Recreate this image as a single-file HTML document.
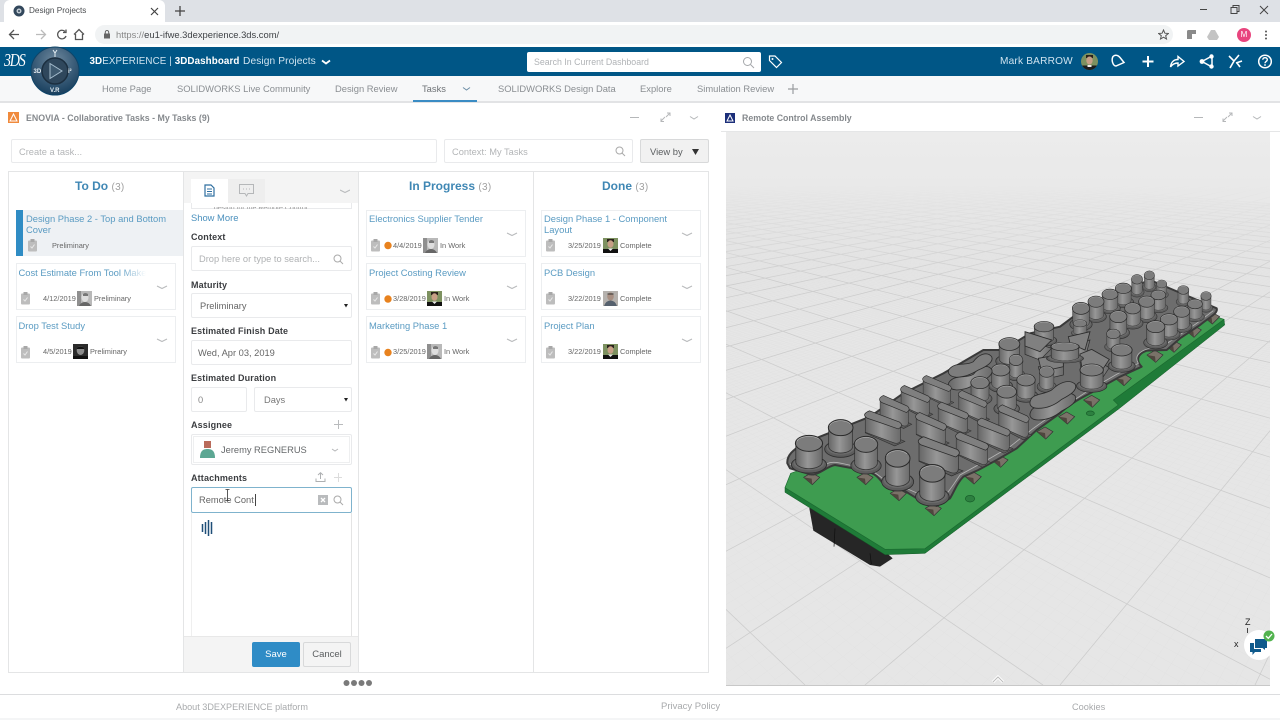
<!DOCTYPE html>
<html><head><meta charset="utf-8"><title>Design Projects</title>
<style>
*{box-sizing:border-box}
html,body{margin:0;padding:0;width:1280px;height:720px;overflow:hidden;background:#fff;font-family:"Liberation Sans",sans-serif}
body{filter:blur(.3px)}
.a,.t{position:absolute}
.t{white-space:nowrap;line-height:12px}
.n{font-size:9.4px;color:#8a8e92;top:83px}
.card{position:absolute;width:160px;height:47px;background:#fff;border:1px solid #eceef0}
.ti{font-size:9.4px;color:#5a9bc2;line-height:11px}
.m{font-size:7.4px;color:#666;line-height:10px}
.lb{font-size:9px;font-weight:bold;color:#3b3d40;letter-spacing:.15px;left:191px}
.inp{position:absolute;background:#fff;border:1px solid #e9eaec;border-radius:2px}
.hd{font-size:12px;font-weight:bold;color:#3f87b4;top:180px}
.hd span{font-weight:normal;color:#a0a0a0;font-size:10px;letter-spacing:.3px}
.ph{font-size:9.3px}
</style></head><body>

<!-- browser chrome -->
<div class="a" style="left:0;top:0;width:1280px;height:22px;background:#dee1e6"></div>
<div class="a" style="left:4px;top:0;width:161px;height:22px;background:#fff;border-radius:6px 6px 0 0"></div>
<svg class="a" style="left:13px;top:5px" width="12" height="12"><circle cx="6" cy="6" r="5.5" fill="#33485c"/><circle cx="6" cy="6" r="2.5" fill="#c3ccd4"/><circle cx="6" cy="6" r="1" fill="#33485c"/></svg>
<div class="t" style="left:29px;top:5px;font-size:8.2px;color:#4a4d50">Design Projects</div>
<svg class="a" style="left:150px;top:7px" width="9" height="9"><path d="M1 1L8 8M8 1L1 8" stroke="#444" stroke-width="1.2"/></svg>
<svg class="a" style="left:175px;top:6px" width="10" height="10"><path d="M5 0V10M0 5H10" stroke="#444" stroke-width="1.3"/></svg>
<svg class="a" style="left:1199px;top:4px" width="72" height="12"><path d="M1 5.5H8" stroke="#444" stroke-width="1"/><path d="M32 3.5h6v6h-6zM34 3.5v-2h6v6h-2" fill="none" stroke="#444" stroke-width="1"/><path d="M61 2L69 10M69 2L61 10" stroke="#444" stroke-width="1"/></svg>

<div class="a" style="left:0;top:22px;width:1280px;height:25px;background:#fff"></div>
<div class="a" style="left:95px;top:25px;width:1078px;height:19px;background:#f1f3f4;border-radius:10px"></div>
<svg class="a" style="left:8px;top:27px" width="80" height="15"><path d="M11 7.5H2M6 3L1.5 7.5L6 12" fill="none" stroke="#555" stroke-width="1.3"/><path d="M37 7.5H28M33 3L37.5 7.5L33 12" fill="none" stroke="#bbb" stroke-width="1.3"/><path d="M57 4.5A4.3 4.3 0 1 0 58 9M58 2.5V5.5H55" fill="none" stroke="#555" stroke-width="1.3"/><path d="M66 7.5L71 2.5L76 7.5M67.5 7V12.5H74.5V7" fill="none" stroke="#555" stroke-width="1.3"/></svg>
<svg class="a" style="left:103px;top:30px" width="8" height="9"><rect x="1" y="3.5" width="6" height="5" fill="#666"/><path d="M2.3 3.5V2.2a1.7 1.7 0 0 1 3.4 0V3.5" fill="none" stroke="#666"/></svg>
<div class="t" style="left:116px;top:29px;font-size:9.4px;color:#3f4246"><span style="color:#888">https://</span>eu1-ifwe.3dexperience.3ds.com/</div>
<svg class="a" style="left:1158px;top:29px" width="11" height="11"><path d="M5.5 1L6.9 4.2L10.3 4.5L7.7 6.7L8.5 10L5.5 8.2L2.5 10L3.3 6.7L.7 4.5L4.1 4.2Z" fill="none" stroke="#555" stroke-width="1"/></svg>
<svg class="a" style="left:1187px;top:30px" width="9" height="9"><path d="M0 1.5Q0 0 1.5 0H9V4H5V9H0Z" fill="#8a8a8a"/></svg>
<svg class="a" style="left:1207px;top:30px" width="12" height="10"><path d="M4 0H8L12 7L10 10H2L0 7Z" fill="#c4c4c4"/></svg>
<div class="a" style="left:1237px;top:28px;width:14px;height:14px;background:#e8457e;border-radius:50%;color:#fff;font-size:8px;line-height:14px;text-align:center">M</div>
<svg class="a" style="left:1264px;top:30px" width="4" height="10"><circle cx="2" cy="1.5" r="1" fill="#555"/><circle cx="2" cy="5" r="1" fill="#555"/><circle cx="2" cy="8.5" r="1" fill="#555"/></svg>

<!-- top bar -->
<div class="a" style="left:0;top:47px;width:1280px;height:29px;background:#005686"></div>
<div class="t" style="left:4px;top:52px;font-size:14px;line-height:20px;color:#fff;font-style:italic;font-family:'Liberation Serif',serif;letter-spacing:-1.2px;transform:scaleY(1.25);transform-origin:0 50%">3DS</div>
<div class="t" style="left:89.5px;top:55.5px;font-size:9.8px;color:#cfe3ef;letter-spacing:.1px"><b style="color:#fff">3D</b>EXPERIENCE | <b style="color:#fff">3DDashboard</b></div>
<div class="t" style="left:243px;top:55.5px;font-size:10.2px;color:#cfe3ef;letter-spacing:.1px">Design Projects</div>
<svg class="a" style="left:321px;top:59px" width="10" height="7"><path d="M1 1.5L5 4.5L9 1.5" fill="none" stroke="#fff" stroke-width="1.8"/></svg>
<div class="a" style="left:527px;top:52px;width:234px;height:20px;background:#fff;border-radius:2px"></div>
<div class="t" style="left:534px;top:56px;font-size:8.8px;color:#b0b3b6">Search In Current Dashboard</div>
<svg class="a" style="left:742px;top:56px" width="13" height="13"><circle cx="5.5" cy="5.5" r="4" fill="none" stroke="#a5a8ab"/><path d="M8.5 8.5L12 12" stroke="#a5a8ab"/></svg>
<svg class="a" style="left:768px;top:54px" width="15" height="15"><path d="M1.5 2H7L13.5 8.5L8.5 13.5L1.5 6.5Z" fill="none" stroke="#fff" stroke-width="1.2"/><circle cx="4.5" cy="5" r="1" fill="#fff"/></svg>
<div class="t" style="left:1000px;top:56px;font-size:10.1px;color:#cfe3ef;letter-spacing:.2px">Mark BARROW</div>
<svg class="a" style="left:1081px;top:53px" width="17" height="17"><defs><clipPath id="ac"><circle cx="8.5" cy="8.5" r="8.5"/></clipPath></defs><g clip-path="url(#ac)"><rect width="17" height="17" fill="#7d9160"/><rect x="5" y="2" width="7" height="3" fill="#2a221c"/><ellipse cx="8.5" cy="7.5" rx="3.2" ry="4" fill="#c79f86"/><rect y="12.5" width="17" height="5" fill="#1d1d1d"/><rect x="6.5" y="12" width="4" height="2" fill="#eee"/></g></svg>
<svg class="a" style="left:1110px;top:53px" width="170" height="17"><path d="M3 3.5C5 1.5 8 2 10 4.5L14 9.5L6 13C3 13 1 7 3 3.5Z" fill="none" stroke="#fff" stroke-width="1.5"/><path d="M38 3V14M32.5 8.5H43.5" stroke="#fff" stroke-width="2"/><path d="M60.5 14C61 9 64 6.5 68 6.5V3.5L74 8.5L68 13V10C65 10 62.5 11 60.5 14Z" fill="none" stroke="#fff" stroke-width="1.4"/><path d="M102 3L92 8.5L102 14V3Z" fill="#005686" stroke="#fff" stroke-width="1.5"/><circle cx="92" cy="8.5" r="2.4" fill="#fff"/><circle cx="101.5" cy="3.5" r="2.2" fill="#fff"/><circle cx="101.5" cy="13.5" r="2.2" fill="#fff"/><path d="M119 3L124 8L120 15M129 2L124 8M126 10L132 8M127 10L130 14" fill="none" stroke="#fff" stroke-width="1.6"/><circle cx="155" cy="8.5" r="6.3" fill="none" stroke="#fff" stroke-width="1.5"/><path d="M152.8 6.8C152.8 4 157.3 4 157.3 6.8C157.3 8.5 155 8.5 155 10.3" fill="none" stroke="#fff" stroke-width="1.4"/><circle cx="155" cy="12" r=".9" fill="#fff"/></svg>

<!-- nav -->
<div class="a" style="left:0;top:76px;width:1280px;height:25px;background:#f7f8f9"></div>
<div class="a" style="left:0;top:101px;width:1280px;height:2px;background:#e2e3e5"></div>
<div class="t n" style="left:102px">Home Page</div>
<div class="t n" style="left:177px">SOLIDWORKS Live Community</div>
<div class="t n" style="left:335px">Design Review</div>
<div class="t n" style="left:422px;color:#6e7276">Tasks</div>
<svg class="a" style="left:462px;top:86px" width="9" height="6"><path d="M1 1.5L4.5 4L8 1.5" fill="none" stroke="#6d8ea6" stroke-width="1"/></svg>
<div class="a" style="left:413px;top:100px;width:64px;height:2px;background:#3a8cc4"></div>
<div class="t n" style="left:498px">SOLIDWORKS Design Data</div>
<div class="t n" style="left:640px">Explore</div>
<div class="t n" style="left:697px">Simulation Review</div>
<svg class="a" style="left:788px;top:84px" width="10" height="10"><path d="M5 0V10M0 5H10" stroke="#9a9da0" stroke-width="1.2"/></svg>

<!-- compass -->
<svg class="a" style="left:30px;top:46px" width="50" height="50">
<defs><radialGradient id="cg" cx=".5" cy=".3" r=".75"><stop offset="0" stop-color="#6f899e"/><stop offset=".55" stop-color="#3a5c78"/><stop offset="1" stop-color="#123a59"/></radialGradient></defs>
<circle cx="25" cy="25" r="24" fill="url(#cg)" stroke="#0e4468" stroke-width="1"/>
<circle cx="25" cy="25" r="13" fill="#2f475c" stroke="#1c2f40" stroke-width="1.5"/>
<path d="M20 17.5L32 25L20 32.5Z" fill="#3f5a70" stroke="#a5bccd" stroke-width="1"/>
<path d="M23 4L25 7L27 4M25 7V11" fill="none" stroke="#e4ecf1" stroke-width="1"/>
<text x="3.5" y="27" font-size="6" font-weight="bold" fill="#e4ecf1" font-family="Liberation Sans">3D</text>
<text x="38" y="27" font-size="6" font-weight="bold" fill="#e4ecf1" font-family="Liberation Sans">i²</text>
<text x="20" y="46" font-size="6" font-weight="bold" fill="#e4ecf1" font-family="Liberation Sans">V.R</text>
</svg>

<!-- left panel -->
<svg class="a" style="left:8px;top:112px" width="11" height="11"><rect width="11" height="11" fill="#f08a3c"/><path d="M5.5 2L9 9H2Z" fill="none" stroke="#fff" stroke-width="1"/></svg>
<div class="t" style="left:26px;top:112px;font-size:8.8px;font-weight:bold;color:#85898d">ENOVIA - Collaborative Tasks - My Tasks (9)</div>
<svg class="a" style="left:629px;top:112px" width="72" height="11"><path d="M1 5.5H10" stroke="#b5b7b9" stroke-width="1"/><path d="M32 9L36 5M32 6.5V9.5H35M41 1L37 5M38 1H41V4" fill="none" stroke="#b5b7b9"/><path d="M61 4.5L65 7L69 4.5" fill="none" stroke="#b5b7b9"/></svg>

<div class="inp" style="left:11px;top:139px;width:426px;height:24px"></div>
<div class="t ph" style="left:19px;top:145.5px;color:#b3b5b7">Create a task...</div>
<div class="inp" style="left:444px;top:139px;width:189px;height:24px"></div>
<div class="t ph" style="left:452px;top:145.5px;color:#b3b5b7">Context: My Tasks</div>
<svg class="a" style="left:615px;top:146px" width="11" height="11"><circle cx="4.5" cy="4.5" r="3.5" fill="none" stroke="#aaa"/><path d="M7 7L10 10" stroke="#aaa"/></svg>
<div class="a" style="left:640px;top:139px;width:69px;height:24px;background:#f1f1f1;border:1px solid #d8d9da;border-radius:2px"></div>
<div class="t" style="left:650px;top:145.5px;font-size:9.4px;color:#5b5e60">View by</div>
<svg class="a" style="left:692px;top:149px" width="7" height="6"><path d="M0 0H7L3.5 6Z" fill="#333"/></svg>

<!-- board -->
<div class="a" style="left:8px;top:171px;width:701px;height:502px;border:1px solid #e4e5e6;background:#fff"></div>
<div class="a" style="left:183px;top:172px;width:1px;height:500px;background:#e4e5e6"></div>
<div class="a" style="left:358px;top:172px;width:1px;height:500px;background:#e4e5e6"></div>
<div class="a" style="left:533px;top:172px;width:1px;height:500px;background:#e4e5e6"></div>
<div class="t hd" style="left:75px">To Do <span>(3)</span></div>
<div class="t hd" style="left:409px">In Progress <span>(3)</span></div>
<div class="t hd" style="left:602px">Done <span>(3)</span></div>

<!-- To do cards -->
<div class="a" style="left:16px;top:210px;width:167px;height:46px;background:#eef1f4"></div>
<div class="a" style="left:16px;top:210px;width:7px;height:46px;background:#2f8cc4"></div>
<div class="t ti" style="left:26px;top:212.5px;white-space:normal;width:150px">Design Phase 2 - Top and Bottom Cover</div>
<div class="t m" style="left:52px;top:240.5px">Preliminary</div>

<div class="card" style="left:16px;top:263px"></div>
<div class="t ti" style="left:18.5px;top:266.5px;width:127px;overflow:hidden;-webkit-mask-image:linear-gradient(90deg,#000 80%,transparent)">Cost Estimate From Tool Maker</div>
<div class="t m" style="left:43px;top:293.5px">4/12/2019</div><div class="t m" style="left:94px;top:293.5px">Preliminary</div>

<div class="card" style="left:16px;top:316px"></div>
<div class="t ti" style="left:18.5px;top:319.5px">Drop Test Study</div>
<div class="t m" style="left:43px;top:347px">4/5/2019</div><div class="t m" style="left:90px;top:347px">Preliminary</div>

<!-- In progress -->
<div class="card" style="left:366px;top:210px"></div>
<div class="t ti" style="left:369px;top:212.5px">Electronics Supplier Tender</div>
<div class="t m" style="left:393px;top:240.5px">4/4/2019</div><div class="t m" style="left:440px;top:240.5px">In Work</div>
<div class="card" style="left:366px;top:263px"></div>
<div class="t ti" style="left:369px;top:266.5px">Project Costing Review</div>
<div class="t m" style="left:393px;top:293.5px">3/28/2019</div><div class="t m" style="left:444px;top:293.5px">In Work</div>
<div class="card" style="left:366px;top:316px"></div>
<div class="t ti" style="left:369px;top:319.5px">Marketing Phase 1</div>
<div class="t m" style="left:393px;top:347px">3/25/2019</div><div class="t m" style="left:444px;top:347px">In Work</div>

<!-- Done -->
<div class="card" style="left:541px;top:210px"></div>
<div class="t ti" style="left:544px;top:212.5px;white-space:normal;width:130px">Design Phase 1 - Component Layout</div>
<div class="t m" style="left:568px;top:240.5px">3/25/2019</div><div class="t m" style="left:620px;top:240.5px">Complete</div>
<div class="card" style="left:541px;top:263px"></div>
<div class="t ti" style="left:544px;top:266.5px">PCB Design</div>
<div class="t m" style="left:568px;top:293.5px">3/22/2019</div><div class="t m" style="left:620px;top:293.5px">Complete</div>
<div class="card" style="left:541px;top:316px"></div>
<div class="t ti" style="left:544px;top:319.5px">Project Plan</div>
<div class="t m" style="left:568px;top:347px">3/22/2019</div><div class="t m" style="left:620px;top:347px">Complete</div>

<!-- card icons overlay -->
<svg class="a" style="left:0;top:200px" width="720" height="170">
<defs>
<g id="cl"><rect x="0" y="1.5" width="9" height="11" rx="1" fill="#bdbdbd"/><rect x="2.5" y="0" width="4" height="3" fill="#a8a8a8"/><path d="M2.5 7.5L4 9L6.5 5.5" fill="none" stroke="#e8e8e8"/></g>
<g id="ch"><path d="M0 0L5 2.5L10 0" fill="none" stroke="#b9bbbd" stroke-width="1.1"/></g>
<g id="mk"><rect width="15" height="15" fill="#7d9160"/><rect x="4" y="1" width="7" height="3" fill="#2a221c"/><ellipse cx="7.5" cy="6" rx="3" ry="3.8" fill="#c79f86"/><rect y="11" width="15" height="4" fill="#111"/><path d="M5 10.5H10L7.5 13Z" fill="#eee"/></g>
<g id="gy"><rect width="15" height="15" fill="#b9b9b9"/><rect x="0" y="0" width="4" height="15" fill="#8f8f8f"/><ellipse cx="8" cy="6.5" rx="3.5" ry="4.5" fill="#dedede"/><path d="M6 3Q8 1 11 3V5H6Z" fill="#777"/><path d="M2 15Q4 11 8 11T14 15Z" fill="#666"/></g>
<g id="dk"><rect width="15" height="15" fill="#2b2b2b"/><ellipse cx="7.5" cy="6.5" rx="3.8" ry="4.5" fill="#8c8c8c"/><path d="M4 4Q7.5 .5 11 4V5H4Z" fill="#111"/><rect y="12" width="15" height="3" fill="#111"/></g>
<g id="bl"><rect width="15" height="15" fill="#b5b1ad"/><ellipse cx="7.5" cy="5.5" rx="3.3" ry="4" fill="#a88f82"/><path d="M4.5 3H10.5" stroke="#333"/><path d="M1 15Q3 9.5 7.5 9.5T14 15Z" fill="#56616e"/></g>
</defs>
<use href="#cl" x="28" y="39"/><use href="#cl" x="21" y="92"/><use href="#cl" x="21" y="146"/>
<use href="#cl" x="371" y="39"/><use href="#cl" x="371" y="92"/><use href="#cl" x="371" y="146"/>
<use href="#cl" x="546" y="39"/><use href="#cl" x="546" y="92"/><use href="#cl" x="546" y="146"/>
<use href="#ch" x="157" y="86"/><use href="#ch" x="157" y="139"/>
<use href="#ch" x="507" y="33"/><use href="#ch" x="507" y="86"/><use href="#ch" x="507" y="139"/>
<use href="#ch" x="682" y="33"/><use href="#ch" x="682" y="86"/><use href="#ch" x="682" y="139"/>
<circle cx="388" cy="45.5" r="3.7" fill="#e8821e"/><circle cx="388" cy="99" r="3.7" fill="#e8821e"/><circle cx="388" cy="152.5" r="3.7" fill="#e8821e"/>
<use href="#gy" x="77" y="91"/><use href="#dk" x="73" y="144"/>
<use href="#gy" x="423" y="38"/><use href="#mk" x="427" y="91"/><use href="#gy" x="427" y="144"/>
<use href="#mk" x="603" y="38"/><use href="#bl" x="603" y="91"/><use href="#mk" x="603" y="144"/>
</svg>

<!-- form column -->
<div class="a" style="left:184px;top:172px;width:174px;height:31px;background:#f4f4f4"></div>
<div class="a" style="left:191px;top:179px;width:37px;height:25px;background:#fff"></div>
<div class="a" style="left:228px;top:179px;width:37px;height:24px;background:#eeeeee"></div>
<svg class="a" style="left:204px;top:184px" width="11" height="13"><path d="M1 1H7L10 4V12H1Z" fill="none" stroke="#2f6fa0" stroke-width="1.2"/><path d="M3 5H8M3 7.5H8M3 10H8" stroke="#2f6fa0"/></svg>
<svg class="a" style="left:239px;top:184px" width="15" height="13"><path d="M.5 .5H14.5V9.5H9L7.5 12L6 9.5H.5Z" fill="none" stroke="#b5b7b9"/><path d="M4 5H5M7 5H8M10 5H11" stroke="#b5b7b9"/></svg>
<svg class="a" style="left:340px;top:189px" width="10" height="5"><use href="#ch" x="0" y="1"/></svg>
<div class="a" style="left:191px;top:203px;width:161px;height:6px;border:1px solid #e9eaec;border-top:0;background:#fff"></div>
<div class="t" style="left:214px;top:207px;font-size:7px;line-height:3px;height:2px;overflow:hidden;color:#999">design for the Remote Control</div>
<div class="t" style="left:191px;top:211.5px;font-size:9.4px;color:#4a90bd">Show More</div>
<div class="t lb" style="top:231px">Context</div>
<div class="inp" style="left:191px;top:246px;width:161px;height:25px"></div>
<div class="t ph" style="left:199px;top:253px;color:#b0b2b4">Drop here or type to search...</div>
<svg class="a" style="left:333px;top:254px" width="11" height="11"><circle cx="4.5" cy="4.5" r="3.5" fill="none" stroke="#aaa"/><path d="M7 7L10 10" stroke="#aaa"/></svg>
<div class="t lb" style="top:279px">Maturity</div>
<div class="inp" style="left:191px;top:293px;width:161px;height:25px"></div>
<div class="t ph" style="left:200px;top:300px;color:#666">Preliminary</div>
<svg class="a" style="left:344px;top:304px" width="4" height="4"><path d="M0 0H4L2 3.5Z" fill="#222"/></svg>
<div class="t lb" style="top:325px">Estimated Finish Date</div>
<div class="inp" style="left:191px;top:340px;width:161px;height:25px"></div>
<div class="t ph" style="left:198px;top:347px;color:#666">Wed, Apr 03, 2019</div>
<div class="t lb" style="top:372px">Estimated Duration</div>
<div class="inp" style="left:191px;top:387px;width:56px;height:25px"></div>
<div class="t ph" style="left:198px;top:393.5px;color:#888">0</div>
<div class="inp" style="left:254px;top:387px;width:98px;height:25px"></div>
<div class="t ph" style="left:264px;top:393.5px;color:#777">Days</div>
<svg class="a" style="left:344px;top:398px" width="4" height="4"><path d="M0 0H4L2 3.5Z" fill="#222"/></svg>
<div class="t lb" style="top:419px">Assignee</div>
<svg class="a" style="left:334px;top:420px" width="9" height="9"><path d="M4.5 0V9M0 4.5H9" stroke="#b9bbbd" stroke-width="1"/></svg>
<div class="inp" style="left:191px;top:434px;width:161px;height:31px"></div>
<div class="a" style="left:193px;top:436px;width:157px;height:27px;border:1px solid #eeeff0"></div>
<svg class="a" style="left:199px;top:441px" width="17" height="17"><rect x="5" y="0" width="7" height="7" fill="#b96b5b"/><path d="M1 17C1 10 4 8 8.5 8S16 10 16 17Z" fill="#5ca793"/></svg>
<div class="t ph" style="left:221px;top:443.5px;color:#66696b">Jeremy REGNERUS</div>
<svg class="a" style="left:331px;top:448px" width="8" height="5"><path d="M1 1L4 3L7 1" fill="none" stroke="#b5b7b9"/></svg>
<div class="t lb" style="top:472px">Attachments</div>
<svg class="a" style="left:315px;top:472px" width="27" height="11"><path d="M5.5 1V7M3 3L5.5 .7L8 3M1 6.5V9.5H10V6.5" fill="none" stroke="#aeb0b2"/><path d="M23.5 1V10M19 5.5H28" stroke="#dcdcdc"/></svg>
<div class="a" style="left:191px;top:513px;width:161px;height:123px;background:#fff;border-right:1px solid #e4e4e4;border-left:1px solid #efefef"></div>
<div class="inp" style="left:191px;top:487px;width:161px;height:26px;border:1px solid #7fb3cd"></div>
<div class="t ph" style="left:199px;top:494px;color:#666">Remote Cont</div>
<div class="a" style="left:255px;top:494px;width:1px;height:12px;background:#444"></div>
<svg class="a" style="left:225px;top:489px" width="5" height="12"><path d="M.5 .5H4.5M2.5 .5V11.5M.5 11.5H4.5" stroke="#333" stroke-width=".8" fill="none"/></svg>
<div class="a" style="left:318px;top:495px;width:10px;height:10px;background:#b9bbbd"></div>
<svg class="a" style="left:318px;top:495px" width="10" height="10"><path d="M3 3L7 7M7 3L3 7" stroke="#fff" stroke-width="1.3"/></svg>
<svg class="a" style="left:333px;top:495px" width="11" height="11"><circle cx="4.5" cy="4.5" r="3.5" fill="none" stroke="#aaa"/><path d="M7 7L10 10" stroke="#aaa"/></svg>
<svg class="a" style="left:201px;top:520px" width="13" height="16"><path d="M1.5 4V12M4.5 2V14M7.5 0V16M10.5 2V14" stroke="#1f4f78" stroke-width="1.5"/></svg>
<div class="a" style="left:184px;top:636px;width:174px;height:36px;background:#f4f4f4;border-top:1px solid #e8e8e8"></div>
<div class="a" style="left:252px;top:642px;width:48px;height:25px;background:#2f8cc6;border-radius:2px;color:#fff;font-size:9.5px;text-align:center;line-height:25px">Save</div>
<div class="a" style="left:303px;top:642px;width:48px;height:25px;background:#f4f4f4;border:1px solid #d8d9da;border-radius:2px;color:#5b5e60;font-size:9.5px;text-align:center;line-height:23px">Cancel</div>
<svg class="a" style="left:342px;top:679px" width="32" height="8"><circle cx="4.5" cy="4" r="3" fill="#7a7a7a"/><circle cx="12" cy="4" r="3" fill="#7a7a7a"/><circle cx="19.5" cy="4" r="3" fill="#7a7a7a"/><circle cx="27" cy="4" r="3" fill="#7a7a7a"/></svg>

<!-- right panel -->
<svg class="a" style="left:725px;top:113px" width="10" height="10"><rect width="10" height="10" fill="#1c2f7a"/><path d="M5 2L8 8H2Z" fill="none" stroke="#fff"/></svg>
<div class="t" style="left:742px;top:112px;font-size:8.8px;font-weight:bold;color:#85898d">Remote Control Assembly</div>
<svg class="a" style="left:1193px;top:112px" width="72" height="11"><path d="M1 5.5H10" stroke="#b5b7b9" stroke-width="1"/><path d="M30 9L34 5M30 6.5V9.5H33M39 1L35 5M36 1H39V4" fill="none" stroke="#b5b7b9"/><path d="M60 4.5L64 7L68 4.5" fill="none" stroke="#b5b7b9"/></svg>
<div class="a" style="left:721px;top:131px;width:559px;height:1px;background:#e5e6e7"></div>

<svg class="a" style="left:726px;top:132px" width="544" height="554" viewBox="726 132 544 554">
<defs><linearGradient id="fd" x1="0" y1="0" x2="0" y2="1"><stop offset="0" stop-color="#ececec"/><stop offset=".35" stop-color="#e9e9e9"/><stop offset="1" stop-color="#e6e6e6" stop-opacity="0"/></linearGradient></defs>
<rect x="726" y="132" width="544" height="554" fill="#e6e6e6"/>
<path id="minor" fill="none" stroke="#dedede" stroke-width=".25"/>
<path id="major" fill="none" stroke="#cdcdcd" stroke-width=".8"/>
<rect x="726" y="132" width="544" height="150" fill="url(#fd)"/>
<path d="M726 685.5H1270" stroke="#c8c8c8" stroke-width="1"/>
<path d="M993 682L998 677L1003 682" fill="none" stroke="#fff" stroke-width="3"/><path d="M993 682L998 677L1003 682" fill="none" stroke="#bbb" stroke-width="1"/>
</svg>
<script>
(function(){var a="",b="",c="",d="";
for(var i=-320;i<=40;i++){var x=865+i*19.5;var s="M1520 128L"+x+" 685";if(i%10==0)c+=s;else a+=s;}
for(var j=-60;j<=300;j++){var y=805+j*23.8;var t="M223 128L"+y+" 685";if(j%10==0)d+=t;else b+=t;}
document.getElementById("minor").setAttribute("d",a+b);document.getElementById("major").setAttribute("d",c+d);})();
</script>

<!-- 3D model -->
<svg class="a" style="left:770px;top:260px" width="470" height="320" viewBox="0 0 1410 960">
<defs>
<linearGradient id="gb" x1="0" x2="1" y1="0" y2="0"><stop offset="0" stop-color="#666"/><stop offset=".45" stop-color="#979797"/><stop offset="1" stop-color="#6a6a6a"/></linearGradient>
<g id="c"><ellipse cy="64" rx="48" ry="25" fill="#5d5d5d" stroke="#2e2e2e" stroke-width="2.5"/><ellipse cy="60" rx="42" ry="21" fill="#6b6b6b"/><path d="M-36 0V56A36 20 0 0 0 36 56V0Z" fill="url(#gb)" stroke="#2e2e2e" stroke-width="2"/><ellipse rx="37" ry="24" fill="#7c7c7c" stroke="#2b2b2b" stroke-width="3"/><path d="M-33-6A33 18 0 0 1 28-12" fill="none" stroke="#bdbdbd" stroke-width="1.5"/></g>
<g id="b"><path d="M-58 36L40 82L74 66L60 60L-50 20Z" fill="#5d5d5d" stroke="#2e2e2e" stroke-width="2"/><path d="M-58-20V34L40 72Q60 76 60 58V6L-40-38Z" fill="url(#gb)" stroke="#2e2e2e" stroke-width="2"/><path d="M-44-42L56-2Q72 10 52 22L-52-16Q-72-30-44-42Z" fill="#7f7f7f" stroke="#2b2b2b" stroke-width="2.5"/></g>
<g id="p"><path d="M-24 0L0-14L24 0L2 22Z" fill="#7a7268" stroke="#333" stroke-width="2"/><path d="M-24 0L2 22L0 4Z" fill="#4f463e"/></g>
<path id="d1" d="M540 325C560 305 590 318 610 305C625 285 650 272 665 290C672 305 650 320 625 330C600 345 585 350 560 352C535 350 530 335 540 325Z" stroke="#2b2b2b" stroke-width="2.5"/>
<path id="d2" d="M782 420C790 400 820 405 845 390C865 370 895 355 915 372C925 390 900 405 875 418C855 435 830 445 805 445C785 445 775 435 782 420Z" stroke="#2b2b2b" stroke-width="2.5"/>
</defs>
<path d="M118 745L130 812L300 915L330 920L368 895L340 870L120 742Z" fill="#262626"/>
<path d="M195 805L192 860M300 880L304 912" stroke="#0e0e0e" stroke-width="2"/>
<path d="M45 697L345 884L465 880L1046 447L1364 195L1362 178L1030 420L1045 435L465 866L345 868L45 683Z" fill="#1f7b38" stroke="#155c28" stroke-width="1.5"/>
<path d="M45 683L62 640L1338 170L1362 178L1030 420L1045 435L465 866L345 868Z" fill="#3e9c50" stroke="#1a6a2f" stroke-width="2"/>
<ellipse cx="600" cy="716" rx="14" ry="10" fill="#2d8040" stroke="#165c28" stroke-width="2"/><ellipse cx="961" cy="460" rx="12" ry="7" fill="#2d8040" stroke="#165c28" stroke-width="2"/>
<g>
<use href="#p" x="125" y="652"/><use href="#p" x="285" y="652"/><use href="#p" x="385" y="700"/><use href="#p" x="490" y="745"/><use href="#p" x="610" y="650"/><use href="#p" x="690" y="600"/><use href="#p" x="825" y="515"/><use href="#p" x="890" y="470"/><use href="#p" x="965" y="420"/><use href="#p" x="1060" y="355"/><use href="#p" x="1155" y="285"/><use href="#p" x="1210" y="255"/><use href="#p" x="1270" y="210"/><use href="#p" x="1325" y="170"/>
</g>
<path d="M52 610C50 585 70 570 100 550L300 470L400 400L520 340L640 270L700 270L780 220L870 200L910 170L1090 80L1140 60L1340 145C1345 160 1320 170 1290 195L1230 235L1190 270L1130 272C1105 280 1095 300 1115 320L1050 350L960 400C920 420 890 440 870 460L800 510L740 565L680 600L625 630L580 650C560 670 555 690 540 715L500 738L440 715L400 690L340 672C325 650 310 632 250 625L195 615C165 620 140 655 110 640L60 625Z" fill="#6d6d6d" stroke="#3a3a3a" stroke-width="6" stroke-linejoin="round"/>
<path d="M60 612C90 628 120 640 170 612C190 600 220 612 260 620C300 625 320 640 345 662L420 690L500 725C530 710 545 680 570 645L660 595L720 560L790 505L860 455L950 395L1045 340L1105 310C1090 285 1110 265 1180 258L1280 190L1330 152" fill="none" stroke="#b5b5b5" stroke-width="2.5"/>
<use href="#c" transform="translate(1138 46) scale(.42 .55)"/><use href="#c" transform="translate(1101 58) scale(.45 .6)"/><use href="#c" transform="translate(1175 72) scale(.42 .5)"/><use href="#c" transform="translate(1240 90) scale(.45 .55)"/><use href="#c" transform="translate(1308 108) scale(.42 .55)"/>
<use href="#c" transform="translate(1060 85) scale(.65 .65)"/><use href="#c" transform="translate(1020 103) scale(.65 .65)"/><use href="#c" transform="translate(1165 105) scale(.6 .6)"/><use href="#c" transform="translate(978 125) scale(.65 .7)"/><use href="#c" transform="translate(1275 132) scale(.6 .6)"/><use href="#c" transform="translate(1130 125) scale(.65 .7)"/>
<use href="#c" transform="translate(933 145) scale(.7 .75)"/><use href="#c" transform="translate(1235 155) scale(.65 .7)"/><use href="#c" transform="translate(1088 145) scale(.65 .7)"/><use href="#c" transform="translate(1045 170) scale(.7 .75)"/><use href="#c" transform="translate(1197 178) scale(.7 .7)"/><use href="#c" transform="translate(1157 200) scale(.75 .75)"/>
<use href="#c" transform="translate(822 200) scale(.8 .65)"/><use href="#c" transform="translate(1030 222) scale(.55 .6)"/><use href="#c" transform="translate(930 190) scale(.55 .45)"/>
<path d="M765 240L845 265L810 300L765 283Z" fill="url(#gb)" stroke="#2b2b2b" stroke-width="2"/><path d="M765 215L845 240L810 275L765 258Z" fill="#808080" stroke="#2b2b2b" stroke-width="2.5"/>
<path d="M895 255L960 240L945 295L900 275Z" fill="url(#gb)" stroke="#2b2b2b" stroke-width="2"/><path d="M895 230L960 215L945 270L900 250Z" fill="#808080" stroke="#2b2b2b" stroke-width="2.5"/>
<path d="M805 320L880 307V345L815 360Z" fill="url(#gb)" stroke="#2b2b2b" stroke-width="2"/><path d="M805 295L880 282V320L815 335Z" fill="#808080" stroke="#2b2b2b" stroke-width="2.5"/>
<path d="M930 307L965 293L1018 323L1000 350L935 345Z" fill="url(#gb)" stroke="#2b2b2b" stroke-width="2"/><path d="M930 282L965 268L1018 298L1000 325L935 320Z" fill="#808080" stroke="#2b2b2b" stroke-width="2.5"/>
<use href="#c" transform="translate(885 260) scale(1.15 .55)"/>
<use href="#c" transform="translate(1055 270) scale(.85 .75)"/>
<use href="#c" transform="translate(718 252) scale(.85 .8)"/><use href="#c" transform="translate(738 300) scale(.55 .7)"/><use href="#c" transform="translate(830 335) scale(.6 .7)"/><use href="#c" transform="translate(965 330) scale(.95 .75)"/><use href="#c" transform="translate(692 330) scale(.75 .75)"/><use href="#c" transform="translate(768 360) scale(.75 .75)"/>
<use href="#d1" transform="translate(0 38)" fill="url(#gb)"/><use href="#d1" fill="#7d7d7d"/>
<use href="#d2" transform="translate(0 35)" fill="url(#gb)"/><use href="#d2" fill="#7d7d7d"/>
<use href="#c" transform="translate(630 368) scale(.75 .75)"/><use href="#c" transform="translate(710 395) scale(.8 .8)"/>
<use href="#b" transform="translate(500 378) scale(.7 .75)"/><use href="#b" transform="translate(435 410) scale(.72 .8)"/><use href="#b" transform="translate(607 425) scale(.7 .8)"/><use href="#b" transform="translate(372 440) scale(.72 .8)"/><use href="#b" transform="translate(548 460) scale(.75 .8)"/><use href="#b" transform="translate(730 470) scale(.75 .85)"/><use href="#b" transform="translate(482 493) scale(.75 .85)"/><use href="#b" transform="translate(338 488) scale(.9 .85)"/><use href="#b" transform="translate(670 510) scale(.8 .85)"/><use href="#b" transform="translate(605 552) scale(.8 .85)"/><use href="#b" transform="translate(505 570) scale(1 .95)"/>
<use href="#c" transform="translate(212 503) scale(1 1)"/><use href="#c" transform="translate(117 550) scale(1.1 1)"/><use href="#c" transform="translate(288 553) scale(.95 1)"/><use href="#c" transform="translate(383 595) scale(1 1.1)"/><use href="#c" transform="translate(487 640) scale(1.05 1.1)"/>
</svg>

<!-- compass triad & chat bubble -->
<div class="t" style="left:1245px;top:616px;font-size:9px;color:#222">Z</div>
<div class="a" style="left:1247px;top:628px;width:1px;height:5px;background:#444"></div>
<div class="t" style="left:1234px;top:638px;font-size:9px;color:#222">x</div>
<div class="a" style="left:1244px;top:630px;width:30px;height:30px;border-radius:50%;background:#fff"></div>
<svg class="a" style="left:1250px;top:639px" width="17" height="16"><path d="M5 0H17V9H15V11L12.5 9H5Z" fill="#0f5a8c"/><path d="M0 4H4V10H11V13H5L2.5 16V13H0Z" fill="#0f5a8c"/></svg>
<svg class="a" style="left:1263px;top:630px" width="12" height="12"><circle cx="6" cy="6" r="5.5" fill="#52b34f"/><path d="M3 6L5.3 8.3L9 4" fill="none" stroke="#fff" stroke-width="1.3"/></svg>

<!-- footer -->
<div class="a" style="left:0;top:694px;width:1280px;height:1px;background:#dcdddf"></div>
<div class="t" style="left:176px;top:701px;font-size:9.1px;color:#a8aaac">About 3DEXPERIENCE platform</div>
<div class="t" style="left:661px;top:701px;font-size:9.5px;color:#a8aaac">Privacy Policy</div>
<div class="t" style="left:1072px;top:701px;font-size:9.2px;color:#a8aaac">Cookies</div>
<div class="a" style="left:0;top:718px;width:1280px;height:2px;background:#f4f5f6"></div>
</body></html>
